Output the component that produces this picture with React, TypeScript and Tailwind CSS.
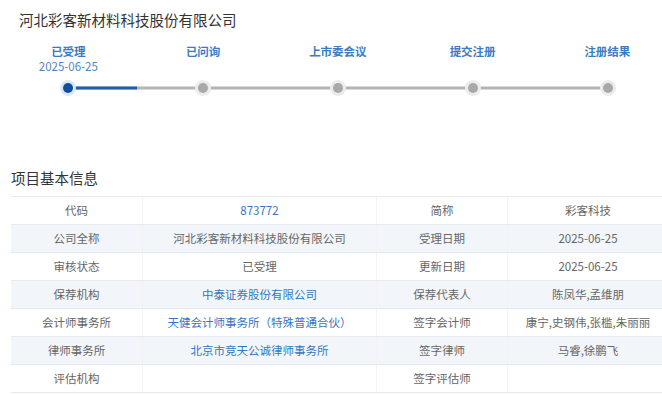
// Project progress + basic info table

const STEPS = [
  { label: '已受理', date: '2025-06-25' },
  { label: '已问询' },
  { label: '上市委会议' },
  { label: '提交注册' },
  { label: '注册结果' },
];

type Cell = { text: string; link?: boolean };

const ROWS: [Cell, Cell, Cell, Cell][] = [
  [{ text: '代码' }, { text: '873772', link: true }, { text: '简称' }, { text: '彩客科技' }],
  [{ text: '公司全称' }, { text: '河北彩客新材料科技股份有限公司' }, { text: '受理日期' }, { text: '2025-06-25' }],
  [{ text: '审核状态' }, { text: '已受理' }, { text: '更新日期' }, { text: '2025-06-25' }],
  [{ text: '保荐机构' }, { text: '中泰证券股份有限公司', link: true }, { text: '保荐代表人' }, { text: '陈凤华,孟维朋' }],
  [{ text: '会计师事务所' }, { text: '天健会计师事务所（特殊普通合伙）', link: true }, { text: '签字会计师' }, { text: '康宁,史钢伟,张槛,朱丽丽' }],
  [{ text: '律师事务所' }, { text: '北京市竞天公诚律师事务所', link: true }, { text: '签字律师' }, { text: '马睿,徐鹏飞' }],
  [{ text: '评估机构' }, { text: '' }, { text: '签字评估师' }, { text: '' }],
];

const COL_W = ['w-[132px]', 'w-[234px]', 'w-[131px]', 'w-[160px]'];

export default function App() {
  return (
    <div
      className="w-[662px] h-[394px] overflow-hidden bg-white"
      style={{ fontFamily: '"Microsoft YaHei", "Noto Sans CJK SC", "Noto Sans", sans-serif' }}
    >
      {/* Company title */}
      <div className="pl-[19px] pt-[10px] h-[40px] text-[14.5px] leading-[20px] text-[#333]">
        河北彩客新材料科技股份有限公司
      </div>

      {/* Progress steps */}
      <div className="grid grid-cols-[repeat(5,134.75px)] ml-[1px] h-[35px] pt-[4px]">
        {STEPS.map((s) => (
          <div key={s.label} className="flex flex-col items-center">
            <span className="text-[11.5px] leading-[15px] font-bold text-[#3a7cc4]">{s.label}</span>
            {s.date && (
              <span className="text-[11.5px] leading-[15px] text-[#4d87c7]">{s.date}</span>
            )}
          </div>
        ))}
      </div>

      {/* Track */}
      <div className="relative ml-[60px] w-[556px] h-[26px] flex items-center justify-between">
        <div className="absolute left-[8px] right-[8px] top-1/2 -translate-y-1/2 h-[3px] bg-[#b4b4b4]" />
        <div className="absolute left-[8px] w-[69px] top-1/2 -translate-y-1/2 h-[3px] bg-[#1e62ad]" />
        {STEPS.map((s, i) => (
          <div
            key={s.label}
            className={`relative w-[16px] h-[16px] rounded-full flex items-center justify-center ${
              i === 0 ? 'bg-[#dbe8f5]' : 'bg-[#ececec]'
            }`}
          >
            <div
              className={`w-[10px] h-[10px] rounded-full ${i === 0 ? 'bg-[#134f98]' : 'bg-[#a9a9a9]'}`}
            />
          </div>
        ))}
      </div>

      {/* Section title */}
      <div className="mt-[67px] pl-[11px] h-[28px] text-[14.5px] leading-[20px] text-[#333]">
        项目基本信息
      </div>

      {/* Info table */}
      <div className="ml-[11px] w-[657px] border-t border-[#ececec]">
        {ROWS.map((row, r) => (
          <div
            key={r}
            className={`flex h-[28px] border-b border-[#e6e9ee] ${r % 2 === 1 ? 'bg-[#f2f6fb]' : 'bg-white'}`}
          >
            {row.map((c, ci) => (
              <div
                key={ci}
                className={`${COL_W[ci]} shrink-0 flex items-center justify-center text-[11.5px] whitespace-nowrap ${
                  ci < 3 ? 'border-r border-[#f3f3f3]' : ''
                } ${c.link ? 'text-[#3576bf]' : 'text-[#666]'}`}
              >
                {c.text}
              </div>
            ))}
          </div>
        ))}
      </div>
    </div>
  );
}
